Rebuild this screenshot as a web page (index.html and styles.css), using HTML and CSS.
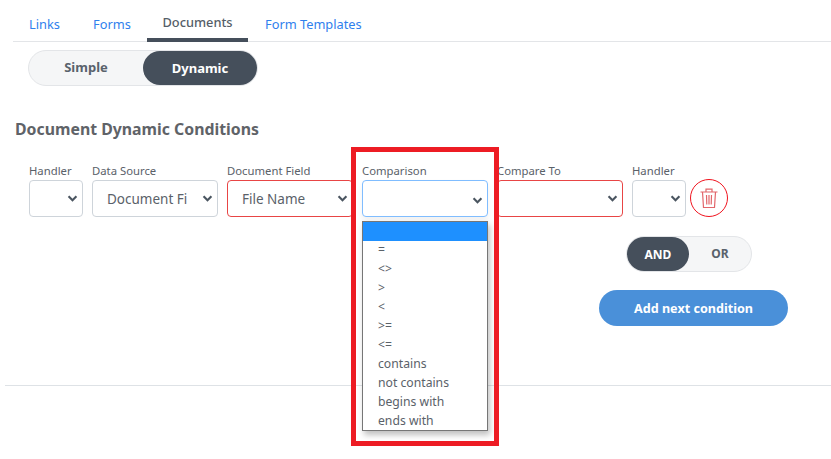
FILE: index.html
```html
<!DOCTYPE html>
<html lang="en">
<head>
<meta charset="utf-8">
<title>Document Dynamic Conditions</title>
<link rel="stylesheet" href="styles.css">
</head>
<body>
<svg class="defs" width="0" height="0" aria-hidden="true"><defs><symbol id="chev" viewBox="0 0 12 8"><path d="M1.5 1.5 6 6l4.5-4.5" fill="none" stroke="currentColor" stroke-width="2.4"/></symbol></defs></svg>
<nav class="tabs">
  <a class="tab">Links</a>
  <a class="tab">Forms</a>
  <a class="tab active">Documents</a>
  <a class="tab">Form Templates</a>
</nav>
<div class="seg seg-mode">
  <span class="seg-item">Simple</span>
  <span class="seg-item on">Dynamic</span>
</div>
<h2 class="heading">Document Dynamic Conditions</h2>
<div class="row">
  <div class="field narrow"><label>Handler</label><div class="select"><span></span><svg class="chev"><use href="#chev"/></svg></div></div>
  <div class="field"><label>Data Source</label><div class="select"><span>Document Fi</span><svg class="chev"><use href="#chev"/></svg></div></div>
  <div class="field"><label>Document Field</label><div class="select err"><span>File Name</span><svg class="chev"><use href="#chev"/></svg></div></div>
  <div class="field"><label>Comparison</label><div class="select focus"><span></span><svg class="chev"><use href="#chev"/></svg></div></div>
  <div class="field"><label>Compare To</label><div class="select err"><span></span><svg class="chev"><use href="#chev"/></svg></div></div>
  <div class="field narrow"><label>Handler</label><div class="select"><span></span><svg class="chev"><use href="#chev"/></svg></div></div>
  <button class="trash" aria-label="Delete">
    <svg width="20" height="22" viewBox="0 0 20 22" fill="none" stroke="#e2666b" stroke-width="1.2">
      <path d="M1.5 5h17M7 5V2.2h6V5M3.5 5l1 15.5h11l1-15.5M7.5 8l.3 9.5M10 8v9.5M12.5 8l-.3 9.5"/>
    </svg>
  </button>
</div>
<div class="seg seg-logic">
  <span class="seg-item on">AND</span>
  <span class="seg-item">OR</span>
</div>
<button class="add">Add next condition</button>
<hr class="rule">
<ul class="menu">
  <li class="sel"></li>
  <li>=</li><li>&lt;&gt;</li><li>&gt;</li><li>&lt;</li><li>&gt;=</li><li>&lt;=</li>
  <li>contains</li><li>not contains</li><li>begins with</li><li>ends with</li>
</ul>
<div class="callout"></div>
</body>
</html>
```
FILE: styles.css
```css
* { box-sizing: border-box; }
html, body { margin: 0; padding: 0; }
body {
  width: 831px;
  height: 459px;
  overflow: hidden;
  position: relative;
  background: #fff;
  font-family: "Noto Sans", "Open Sans", sans-serif;
  color: #555e68;
}
.defs { position: absolute; }
.tabs {
  display: flex;
  height: 42px;
  margin-left: 13px;
  padding-top: 13px;
  border-bottom: 1px solid #e3e5e8;
}
.tab {
  padding: 3px 16px 0;
  font-size: 12.8px;
  line-height: 17px;
  color: #2f80ed;
  white-space: nowrap;
}
.tab:nth-child(2) { width: 70px; }
.tab:nth-child(1) { width: 64px; }
.tab.active {
  width: 101px;
  height: 29px;
  padding: 1px 0 0;
  color: #555e68;
  font-weight: 500;
  border-bottom: 4px solid #454f5b;
  text-align: center;
}
.tab:last-child { padding-left: 17px; }
.seg {
  display: flex;
  height: 36px;
  border: 1px solid #e3e5e8;
  border-radius: 18px;
  background: #f5f6f7;
  font-weight: 700;
  font-size: 13px;
  color: #59626c;
}
.seg-item {
  display: flex;
  align-items: center;
  justify-content: center;
  border-radius: 17px;
}
.seg-item.on { background: #454f5b; color: #fff; }
.seg-mode { width: 230px; margin: 8px 0 0 28px; }
.seg-mode .seg-item { width: 114px; padding-bottom: 3px; }
.seg-mode .seg-item:first-child { flex: 1; }
.seg-mode .seg-item.on { padding-bottom: 0; }
.heading {
  margin: 33px 0 0 15px;
  font-size: 15.85px;
  line-height: 20px;
  font-weight: 700;
  color: #5f6368;
}
.row {
  display: flex;
  gap: 9px;
  margin: 24px 0 0 29px;
}
.field { width: 126px; display: flex; flex-direction: column; }
.field.narrow { width: 54px; }
.field label {
  font-size: 11.3px;
  line-height: 16px;
  height: 17px;
  white-space: nowrap;
  color: #5a6169;
}
.select {
  display: flex;
  align-items: center;
  justify-content: space-between;
  height: 37px;
  padding: 0 4px 0 14px;
  border: 1px solid #ced4da;
  border-radius: 4px;
  background: #fff;
  font-size: 13.5px;
  color: #5a6169;
}
.select span { white-space: nowrap; overflow: hidden; width: 82px; }
.select.err { border-color: #e84545; }
.select.focus { border-color: #80bdff; box-shadow: 0 4px 6px rgba(0,0,0,.06); }
.select.focus .chev { margin-top: 3px; }
.chev { width: 11px; height: 7px; color: #4a5560; flex: none; }
.trash {
  width: 38px;
  height: 38px;
  margin: 16px 0 0 -5px;
  padding: 0;
  display: flex;
  align-items: center;
  justify-content: center;
  background: #fff;
  border: 1px solid #f0131e;
  border-radius: 50%;
}
.seg-logic { width: 126px; margin: 19px 0 0 626px; font-size: 12px; }
.seg-logic .seg-item { width: 62px; }
.seg-logic .seg-item:last-child { flex: 1; padding-bottom: 2px; }
.add {
  display: block;
  width: 189px;
  height: 36px;
  margin: 18px 0 0 599px;
  padding: 0;
  border: 0;
  border-radius: 18px;
  background: #4a90d9;
  color: #fff;
  font: 700 12.6px "Noto Sans", sans-serif;
}
.rule {
  margin: 59px 0 0 5px;
  border: 0;
  border-top: 1px solid #dee2e6;
}
.menu {
  position: absolute;
  left: 362px;
  top: 221px;
  width: 126px;
  height: 210px;
  margin: 0;
  padding: 0;
  list-style: none;
  background: #fff;
  border: 1px solid #767676;
  box-shadow: 2px 4px 6px rgba(0,0,0,.25);
  font-size: 12.2px;
  color: #5a6169;
}
.menu li {
  height: 19px;
  line-height: 18px;
  padding-left: 15px;
  white-space: nowrap;
}
.menu li.sel { background: #1e90ff; }
.callout {
  position: absolute;
  left: 351px;
  top: 147px;
  width: 148px;
  height: 299px;
  border: 5px solid #ed1c24;
}
```
